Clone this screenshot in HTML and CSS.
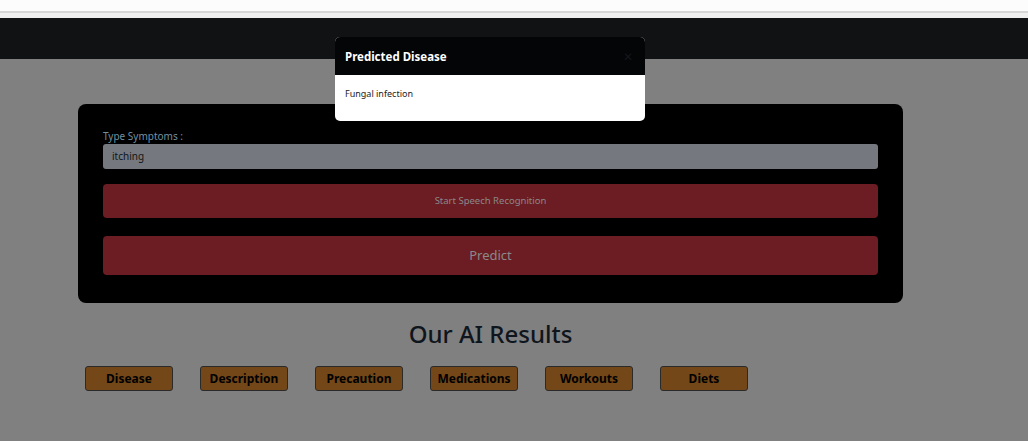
FILE: index.html
```html
<!DOCTYPE html>
<html>
<head>
<meta charset="utf-8">
<link rel="stylesheet" href="styles.css">
</head>
<body>
<div class="topstrip"><div class="strip-line"></div></div>
<nav class="navbar"></nav>
<main class="page">
  <section class="card">
    <label class="label">Type Symptoms :</label>
    <div class="input">itching</div>
    <div class="btn btn-speech">Start Speech Recognition</div>
    <div class="btn btn-predict">Predict</div>
  </section>
  <h1 class="title">Our AI Results</h1>
  <div class="results">
    <div class="rbtn">Disease</div>
    <div class="rbtn">Description</div>
    <div class="rbtn">Precaution</div>
    <div class="rbtn">Medications</div>
    <div class="rbtn">Workouts</div>
    <div class="rbtn">Diets</div>
  </div>
</main>
<div class="modal">
  <div class="modal-header">
    <span class="modal-title">Predicted Disease</span>
    <span class="close">&#x2715;</span>
  </div>
  <div class="modal-body">Fungal infection</div>
</div>
</body>
</html>
```

FILE: styles.css
```css
html, body {
  margin: 0;
  padding: 0;
}
body {
  background: #808080;
  font-family: "Noto Sans", "Open Sans", sans-serif;
  width: 1028px;
  height: 441px;
  overflow: hidden;
  position: relative;
}
.topstrip {
  height: 18px;
  background: #fcfcfc;
  display: flex;
  flex-direction: column;
}
.strip-line {
  margin-top: 11px;
  height: 2px;
  background: #d6d6d6;
  border-bottom: 5px solid #efefef;
}
.navbar {
  height: 41px;
  background: #111214;
}
.page {
  width: 825px;
  margin-left: 78px;
  padding-top: 45px;
}
.card {
  background: #000;
  border-radius: 8px;
  padding: 26px 25px 28px 25px;
  display: flex;
  flex-direction: column;
}
.label {
  font-size: 10px;
  color: #7490a0;
  line-height: 13px;
  margin-bottom: 1px;
}
.input {
  height: 25px;
  background: #75797f;
  border-radius: 3px;
  font-size: 10px;
  line-height: 25px;
  color: #121416;
  padding-left: 9px;
}
.btn {
  background: #6c1c23;
  border-radius: 4px;
  color: #898989;
  text-align: center;
}
.btn-speech {
  margin-top: 15px;
  height: 34px;
  line-height: 34px;
  font-size: 9.5px;
}
.btn-predict {
  margin-top: 18px;
  height: 39px;
  line-height: 39px;
  font-size: 13px;
}
.title {
  margin: 14px 0 0 0;
  text-align: center;
  font-size: 24px;
  font-weight: 500;
  color: #0f151c;
  line-height: 34px;
}
.results {
  display: flex;
  gap: 27px;
  margin-top: 15px;
  margin-left: 7px;
}
.rbtn {
  width: 86px;
  height: 23px;
  background: #734717;
  border: 1px solid #2a2a2a;
  border-radius: 3px;
  color: #000;
  font-weight: 700;
  font-size: 12px;
  line-height: 23px;
  text-align: center;
}
.modal {
  position: absolute;
  left: 335px;
  top: 37px;
  width: 310px;
  border-radius: 5px;
  overflow: hidden;
  background: #fff;
}
.modal-header {
  height: 38px;
  background: #030507;
  display: flex;
  align-items: center;
  justify-content: space-between;
  padding: 0 12px 0 10px;
}
.modal-title {
  color: #fff;
  font-weight: 700;
  font-size: 11.5px;
}
.close {
  color: #141618;
  font-size: 12px;
}
.modal-body {
  height: 46px;
  padding: 12px 10px 0 10px;
  box-sizing: border-box;
  font-size: 9px;
  color: #222;
}
```
